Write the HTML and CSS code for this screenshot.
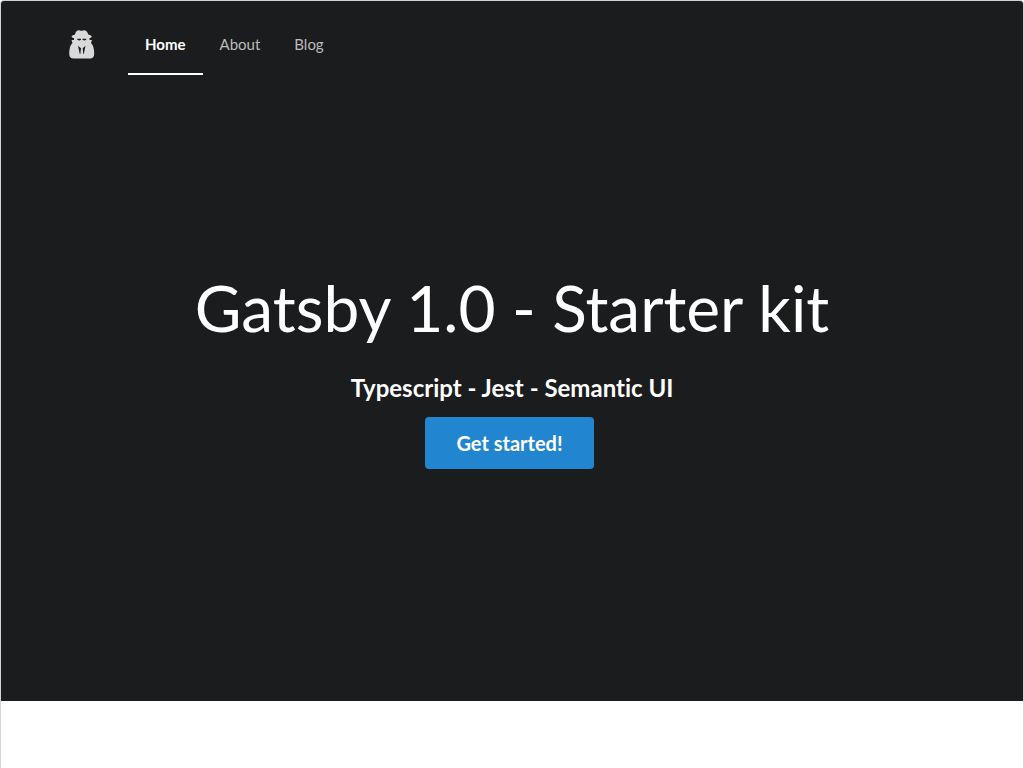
FILE: index.html
```html
<!DOCTYPE html>
<html lang="en">
<head>
<meta charset="utf-8">
<meta name="viewport" content="width=device-width, initial-scale=1">
<title>Gatsby 1.0 - Starter kit</title>
<link rel="stylesheet" href="styles.css">
</head>
<body>
<div class="page">
  <header class="masthead">
    <nav class="menu" aria-label="Main">
      <svg class="logo" viewBox="0 0 26 30" aria-hidden="true"><path fill-rule="evenodd" d="M8 0.700Q9.500 -0.200 11 0.500Q12.500 1 14 0.500Q15.500 -0.200 17 0.700Q18.500 2 19.300 4.500Q22.800 5.300 22.800 6.500Q22.800 7.800 20.500 8.300V10H23L22 13Q25.200 16 25.200 23.500Q25.200 28.500 21 28.500H4.500Q0.200 28.500 0.200 23.500Q0.200 16 3.500 13L2.500 10H5V8.300Q2.500 7.800 2.500 6.500Q2.500 5.300 6 4.500Q6.500 2 8 0.700ZM8 8.700H12V9.700Q10 11.200 8.500 9.700ZM13.500 8.700H17.500L17 9.700Q15.500 11.200 13.500 9.700ZM9 15.800L12 18.300L11.300 24H10.800ZM16.500 15.800L13.700 18.300L14.300 24H14.800Z"/></svg>
      <a class="item active" href="#home" aria-current="page">Home</a>
      <a class="item" href="#about">About</a>
      <a class="item" href="#blog">Blog</a>
    </nav>
    <div class="hero">
      <h1 class="title">Gatsby 1.0 - Starter kit</h1>
      <h2 class="subtitle">Typescript - Jest - Semantic UI</h2>
      <button class="button" type="button">Get started!</button>
    </div>
  </header>
</div>
</body>
</html>
```
FILE: styles.css
```css
* {
  box-sizing: border-box;
}

body {
  margin: 0;
  background: #fff;
  font-family: Lato, "Liberation Sans", sans-serif;
  font-size: 14px;
  font-variant-ligatures: no-common-ligatures;
}

.page {
  min-height: 100vh;
  border: 1px solid #d4d4d5;
  border-bottom: 0;
  border-radius: 4px 4px 0 0;
  overflow: hidden;
}

.masthead {
  min-height: 700px;
  padding: 14px 50px;
  background: #1b1c1d;
  color: #fff;
}

.menu {
  display: flex;
  align-items: flex-end;
}

.logo {
  width: 26px;
  height: 30px;
  margin: 0 33px 15px 18px;
  fill: #d9d9d9;
}

.item {
  padding: 20px 17px;
  border-bottom: 2px solid transparent;
  color: #bbb;
  font-size: 15px;
  line-height: 18px;
  text-decoration: none;
}

.active {
  border-color: #fff;
  color: #fff;
  font-weight: 700;
}

.hero {
  padding-top: 192px;
  text-align: center;
}

.title {
  margin: 0;
  font-size: 64px;
  font-weight: 400;
  line-height: 82px;
}

.subtitle {
  margin: 24px 0 14px;
  font-size: 24px;
  font-weight: 700;
  line-height: 30px;
}

.button {
  margin: 0 5px 0 0;
  padding: 16px 31px;
  border: 0;
  border-radius: 4px;
  background: #2185d0;
  color: #fff;
  font: 700 20px/20px Lato, "Liberation Sans", sans-serif;
  cursor: pointer;
}
```
